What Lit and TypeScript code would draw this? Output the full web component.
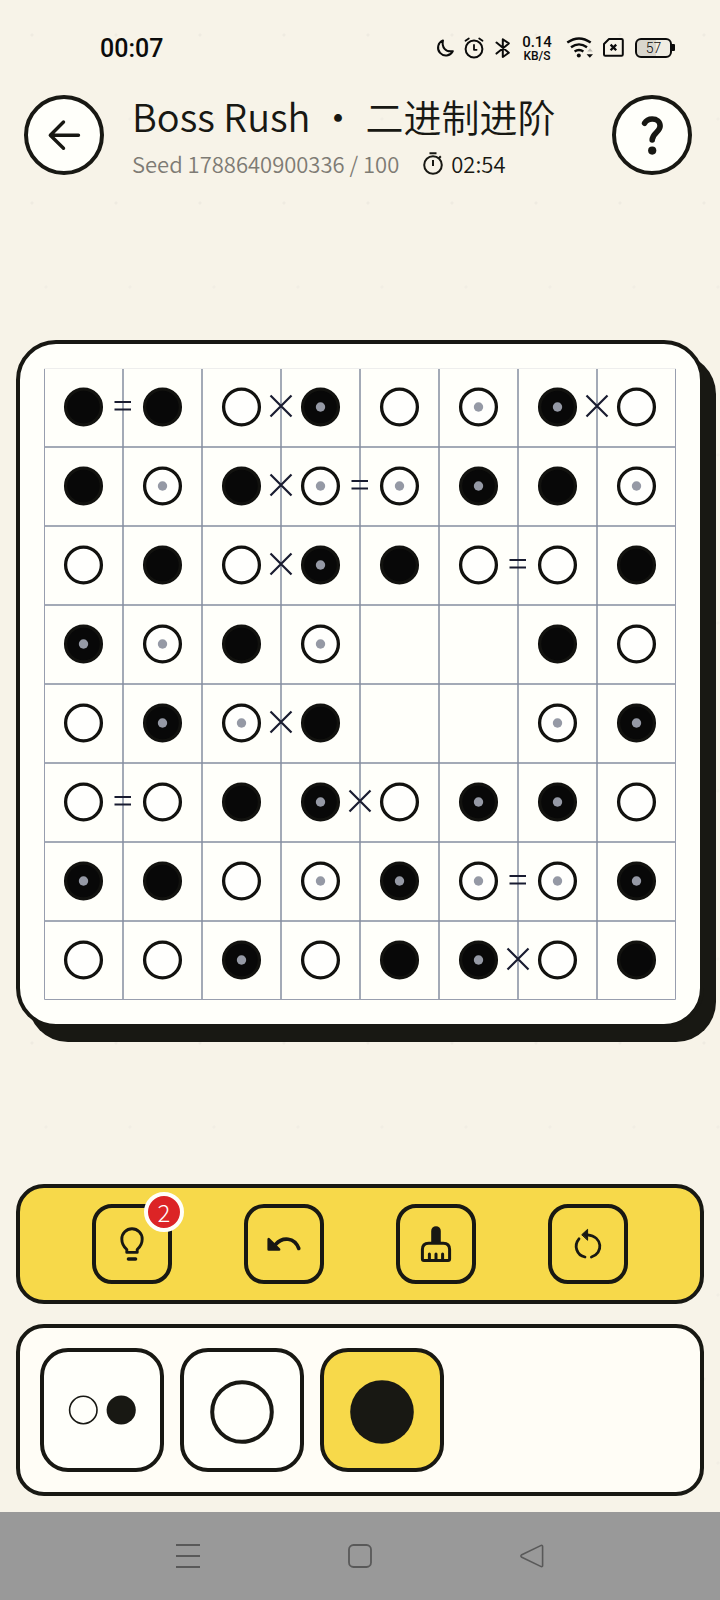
import { LitElement, html, svg, css, nothing } from "lit";
import { customElement, state } from "lit/decorators.js";

// Upper case marks a piece placed by the player, lower case a given one.
const ROWS = ["bbwBwWBw", "bWbWWBbW", "wbwBbwwb", "BWbW..bw", "wBWb..WB", "wwbBwBBw", "BbwWBWWB", "wwBwbBwb"];

// [row, column on the left of the shared edge, relation]
const RELATIONS: [number, number, string][] = [
  [0, 0, "="], [0, 2, "x"], [0, 6, "x"],
  [1, 2, "x"], [1, 3, "="],
  [2, 2, "x"], [2, 5, "="],
  [4, 2, "x"],
  [5, 0, "="], [5, 3, "x"],
  [6, 5, "="],
  [7, 5, "x"],
];

const CELL = 79;
const SIZE = CELL * 8;

@customElement("puzzle-board")
class PuzzleBoard extends LitElement {
  static styles = css`
    :host { display: block; }
    .frame {
      box-sizing: border-box;
      padding: 24px;
      border: 4px solid #181813;
      border-radius: 40px;
      background: #fffffa;
      box-shadow: 12px 14px 0 #181813;
    }
    .grid {
      position: relative;
      display: grid;
      grid-template-columns: repeat(8, 1fr);
      aspect-ratio: 1;
    }
    .cell {
      display: block;
      padding: 0;
      border: 0;
      background: none;
      aspect-ratio: 1;
    }
    .piece { display: block; width: 100%; height: 100%; }
    .marks {
      position: absolute;
      inset: 0;
      width: 100%;
      height: 100%;
      pointer-events: none;
    }
  `;

  private piece(kind: string) {
    if (kind === ".") return nothing;
    const black = kind.toLowerCase() === "b";
    const placed = kind !== kind.toLowerCase();
    return html`<svg class="piece" viewBox="0 0 79 79" aria-hidden="true">
      <circle cx="39.5" cy="39" r="17.9" fill=${black ? "#080808" : "#fffffd"} stroke="#12120f" stroke-width="3.3" />
      ${placed ? svg`<circle cx="39.5" cy="39" r="4.7" fill="#9599a5" />` : nothing}
    </svg>`;
  }

  private relation([row, col, kind]: [number, number, string]) {
    const x = (col + 1) * CELL;
    const y = row * CELL + 38;
    return kind === "="
      ? svg`<path d="M${x - 8.5} ${y - 4}h16.5M${x - 8.5} ${y + 3.5}h16.5" stroke="#191c30" stroke-width="2.2" />`
      : svg`<path d="M${x - 10.5} ${y - 10.5}l21 21M${x + 10.5} ${y - 10.5}l-21 21" stroke="#191c30" stroke-width="2.2" />`;
  }

  render() {
    const steps = [1, 2, 3, 4, 5, 6, 7];
    const lines = steps.map((i) => `M${i * CELL} 0V${SIZE}M0 ${i * CELL}H${SIZE}`).join("");
    return html`<div class="frame">
      <div class="grid">
        ${ROWS.map((row, r) => [...row].map((kind, c) => html`
          <button class="cell" aria-label="${r + 1}, ${c + 1}">${this.piece(kind)}</button>`))}
        <svg class="marks" viewBox="0 0 ${SIZE} ${SIZE}" fill="none" aria-hidden="true">
          <path d=${lines} stroke="#858ea0" stroke-width="1.5" />
          <path d="M.5 0V631.5H631.5V0" stroke="#989eae" />
          <path d="M0 .5H632" stroke="#eeeeed" />
          ${RELATIONS.map((item) => this.relation(item))}
        </svg>
      </div>
    </div>`;
  }
}

@customElement("app-root")
class AppRoot extends LitElement {
  @state() private tool = "black";

  static styles = css`
    :host {
      display: flex;
      flex-direction: column;
      box-sizing: border-box;
      min-height: 100vh;
      color: #181813;
      background:
        radial-gradient(circle, #efebe1 1px, transparent 2px) -10px -49px / 84px 168px,
        radial-gradient(circle, #f2eee4 1px, transparent 2px) 4px 35px / 84px 168px,
        #f7f3e8;
      font-family: "Noto Sans CJK SC", "Noto Sans", sans-serif;
      font-weight: 350;
    }
    button {
      box-sizing: border-box;
      display: grid;
      place-items: center;
      flex: none;
      margin: 0;
      padding: 0;
      border: 4px solid #181813;
      background: #fffffa;
      color: #181813;
      font: inherit;
    }
    svg { display: block; }

    .status {
      display: flex;
      box-sizing: border-box;
      height: 87px;
      padding: 8px 45px 0 100px;
      align-items: center;
      justify-content: space-between;
      color: #0b0b0b;
      font-family: Roboto, "Noto Sans", sans-serif;
      font-weight: 400;
    }
    .time { padding-top: 2px; font-size: 25px; line-height: 32px; font-weight: 500; }
    .icons { display: flex; align-items: center; }
    .rate {
      display: flex;
      flex-direction: column;
      width: 44px;
      text-align: center;
      font-weight: 500;
    }
    .amount { font-size: 15px; line-height: 16px; }
    .unit { font-size: 12px; line-height: 12px; }
    .level {
      box-sizing: border-box;
      width: 37px;
      height: 20px;
      border: 2px solid #0b0b0b;
      border-radius: 6px;
      background: linear-gradient(90deg, #d9d6cd 57%, #f0ede3 57%);
      text-align: center;
      font-size: 14px;
      line-height: 16px;
      font-weight: 300;
    }
    .tip { width: 3px; height: 7px; background: #0b0b0b; border-radius: 0 1px 1px 0; }

    .header {
      display: flex;
      align-items: flex-start;
      gap: 28px;
      padding: 8px 28px 7px 24px;
    }
    .round { width: 80px; height: 80px; border-radius: 50%; }
    .heading {
      display: flex;
      flex-direction: column;
      flex: 1;
      gap: 12px;
      min-width: 0;
    }
    .title {
      margin: 0;
      font-size: 38px;
      line-height: 42px;
      font-weight: 350;
      white-space: nowrap;
    }
    .meta {
      display: flex;
      align-items: center;
      gap: 24px;
      font-size: 22px;
      line-height: 28px;
      white-space: nowrap;
    }
    .seed { color: #7e7b74; }
    .timer { display: flex; align-items: center; gap: 8px; }

    .stage {
      flex: 1;
      display: flex;
      flex-direction: column;
      justify-content: center;
      padding: 0 16px;
    }
    .panels {
      display: flex;
      flex-direction: column;
      gap: 20px;
      padding: 0 16px 16px;
    }
    .panel {
      display: flex;
      border: 4px solid #181813;
      border-radius: 28px;
    }
    .tools {
      justify-content: space-evenly;
      padding: 16px 0;
      background: #f7d94a;
    }
    .tool {
      position: relative;
      width: 80px;
      height: 80px;
      border-radius: 20px;
      background: none;
    }
    .badge {
      position: absolute;
      top: -16px;
      right: -16px;
      box-sizing: border-box;
      width: 40px;
      height: 40px;
      border: 4px solid #fffffa;
      border-radius: 50%;
      background: #dc2426;
      color: #fff;
      font-size: 24px;
      line-height: 32px;
      font-weight: 300;
    }
    .palette {
      gap: 16px;
      padding: 20px;
      background: #fffdf6;
    }
    .swatch { width: 124px; height: 124px; border-radius: 28px; }
    .chosen { background: #f7d94a; }

    .nav {
      display: flex;
      justify-content: center;
      gap: 148px;
      height: 88px;
      align-items: center;
      background: #999;
    }
    .key {
      width: 24px;
      height: 24px;
      border: 0;
      background: none;
      color: #595959;
    }
  `;

  private swatch(id: string, label: string, art: unknown) {
    return html`<button
      class="swatch ${this.tool === id ? "chosen" : ""}"
      aria-label=${label}
      aria-pressed=${this.tool === id}
      @click=${() => { this.tool = id; }}
    ><svg width="116" height="116" viewBox="0 0 116 116" fill="none" stroke="#181813">${art}</svg></button>`;
  }

  render() {
    return html`
      <div class="status">
        <span class="time">00:07</span>
        <div class="icons">
          <svg width="80" height="26" viewBox="435 35 80 26" fill="none" stroke="currentColor" stroke-width="2" stroke-linejoin="round" stroke-linecap="round" aria-hidden="true">
            <path d="M443 40.4A7.8 7.8 0 1 0 452.8 51.2Q447.4 52 444.6 48.8T443 40.4Z" />
            <circle cx="474" cy="49" r="8.4" />
            <path d="M474 45v4.8h2.6" stroke-width="1.8" />
            <path d="M465.5 40.7l3.3-2.2M482.5 40.7l-3.3-2.2" stroke-width="1.8" />
            <path d="M496.5 42.6l12.3 10.2-6 4.2V39.2l6 4.2-12.3 10.2" />
          </svg>
          <span class="rate"><span class="amount">0.14</span><span class="unit">KB/S</span></span>
          <svg width="76" height="26" viewBox="559 35 76 26" fill="none" stroke="currentColor" stroke-width="2.4" aria-hidden="true">
            <path d="M567.3 42.6Q579 34.4 590.7 42.6M571 47.2Q579 41.6 587 47.2M574.6 51.4Q579 48.6 583.4 51.4" />
            <circle cx="578.8" cy="55.6" r="2" fill="currentColor" stroke="none" />
            <path d="M587.2 51.4l2.8-3.2 2.8 3.2z" fill="#bbb8b0" stroke="none" />
            <path d="M586.6 54.2h6.4l-3.2 3.6z" fill="currentColor" stroke="none" />
            <path d="M609 39h12.5q1.3 0 1.3 1.3v14.2q0 1.3-1.3 1.3h-16.2q-1.3 0-1.3-1.3V44z" stroke-width="2" stroke-linejoin="round" />
            <path d="M610.6 44.6l5.6 5.6M616.2 44.6l-5.6 5.6" stroke-width="2.3" />
          </svg>
          <span class="level">57</span>
          <span class="tip"></span>
        </div>
      </div>

      <header class="header">
        <button class="round" aria-label="Back">
          <svg width="36" height="36" viewBox="0 0 36 36" fill="none" stroke="currentColor" stroke-width="3.4" stroke-linecap="round" stroke-linejoin="round">
            <path d="M32.5 18.3H4.5M17.5 5L4.3 18.3l13.2 13" />
          </svg>
        </button>
        <div class="heading">
          <h1 class="title">Boss Rush ・ 二进制进阶</h1>
          <div class="meta">
            <span class="seed">Seed 1788640900336 / 100</span>
            <span class="timer">
              <svg width="20" height="24" viewBox="0 0 20 24" fill="none" stroke="currentColor" stroke-width="2">
                <circle cx="10" cy="14" r="8.8" />
                <path d="M6.5 2.200h7M10 9v6M15.8 7.300l2-2" />
              </svg>
              02:54
            </span>
          </div>
        </div>
        <button class="round" aria-label="Help">
          <svg width="30" height="42" viewBox="0 0 30 42" fill="none" stroke="currentColor" stroke-width="5.6" stroke-linecap="round" stroke-linejoin="round">
            <path d="M7.6 9.200C9.5 5.800 12 5 15.2 5c4.400 0 7.900 2.500 7.900 7 0 6-7.900 7-7.900 14" />
            <circle cx="15.2" cy="36.600" r="4.1" fill="currentColor" stroke="none" />
          </svg>
        </button>
      </header>

      <main class="stage"><puzzle-board></puzzle-board></main>

      <div class="panels">
        <div class="panel tools">
          <button class="tool" aria-label="Hint">
            <svg width="40" height="40" viewBox="0 0 40 40" fill="none" stroke="currentColor" stroke-width="2.9" stroke-linejoin="round" stroke-linecap="round">
              <path d="M14.8 28.4V25.5C11.4 22.5 9.8 19.5 9.8 15a10.2 10.2 0 0 1 20.4 0c0 4.5-1.6 7.5-5 10.5v2.9z" />
              <path d="M16.4 35h7.2" stroke-width="3.4" />
            </svg>
            <span class="badge">2</span>
          </button>
          <button class="tool" aria-label="Undo">
            <svg width="40" height="40" viewBox="0 0 40 40" fill="none" stroke="currentColor" stroke-width="3.6" stroke-linecap="round">
              <path d="M11.5 20.5C18.5 12.6 30.5 13 34.8 24.5" />
              <path d="M4.7 15.2v10.2h10.4z" fill="currentColor" stroke-width="2.6" stroke-linejoin="round" />
            </svg>
          </button>
          <button class="tool" aria-label="Clear">
            <svg width="40" height="40" viewBox="0 0 40 40" fill="none" stroke="currentColor" stroke-width="3" stroke-linecap="round" stroke-linejoin="round">
              <path d="M15.2 19V7a4.8 4.8 0 0 1 9.6 0V19z" fill="currentColor" stroke="none" />
              <path d="M6.4 35V25.5q0-6.3 6.3-6.3h14.6q6.3 0 6.3 6.3v9.5q0 1.5-1.5 1.5H7.9q-1.5 0-1.5-1.500z" />
              <path d="M13.4 36V30M20 36V30M26.6 36V30" />
            </svg>
          </button>
          <button class="tool" aria-label="Restart">
            <svg width="40" height="40" viewBox="0 0 40 40" fill="none" stroke="currentColor" stroke-width="2.8" stroke-linecap="round">
              <path d="M11 14.8C5.4 21.5 8.6 31.2 17 33M23.4 33C35.5 29.5 35 12.4 19.5 10.8" />
              <path d="M14 10.5l5.6-5.2v10.6z" fill="currentColor" stroke-width="1" stroke-linejoin="round" />
            </svg>
          </button>
        </div>

        <div class="panel palette">
          ${this.swatch("cycle", "Cycle", svg`<circle cx="39.3" cy="58" r="13.7" stroke-width="1.6" /><circle cx="77.2" cy="58" r="14.6" fill="#181813" stroke="none" />`)}
          ${this.swatch("white", "White", svg`<circle cx="58" cy="60" r="29.8" stroke-width="4" />`)}
          ${this.swatch("black", "Black", svg`<circle cx="58" cy="60" r="31.8" fill="#181813" stroke="none" />`)}
        </div>
      </div>

      <nav class="nav">
        <button class="key" aria-label="Recent apps">
          <svg width="24" height="24" viewBox="0 0 24 24" stroke="currentColor" stroke-width="2"><path d="M0 1h24M0 12h24M0 23h24" /></svg>
        </button>
        <button class="key" aria-label="Home">
          <svg width="24" height="24" viewBox="0 0 24 24" fill="none" stroke="currentColor" stroke-width="1.8"><rect x="1" y="1" width="22" height="22" rx="4.5" /></svg>
        </button>
        <button class="key" aria-label="Back">
          <svg width="24" height="24" viewBox="0 0 24 24" fill="none" stroke="currentColor" stroke-width="1.6" stroke-linejoin="round"><path d="M21.2 1.4L1.8 10.7q-1.8 1.3 0 2.6L21.2 22.6q1.4.4 1.4-1.2V2.6q0-1.6-1.4-1.2z" /></svg>
        </button>
      </nav>
    `;
  }
}
